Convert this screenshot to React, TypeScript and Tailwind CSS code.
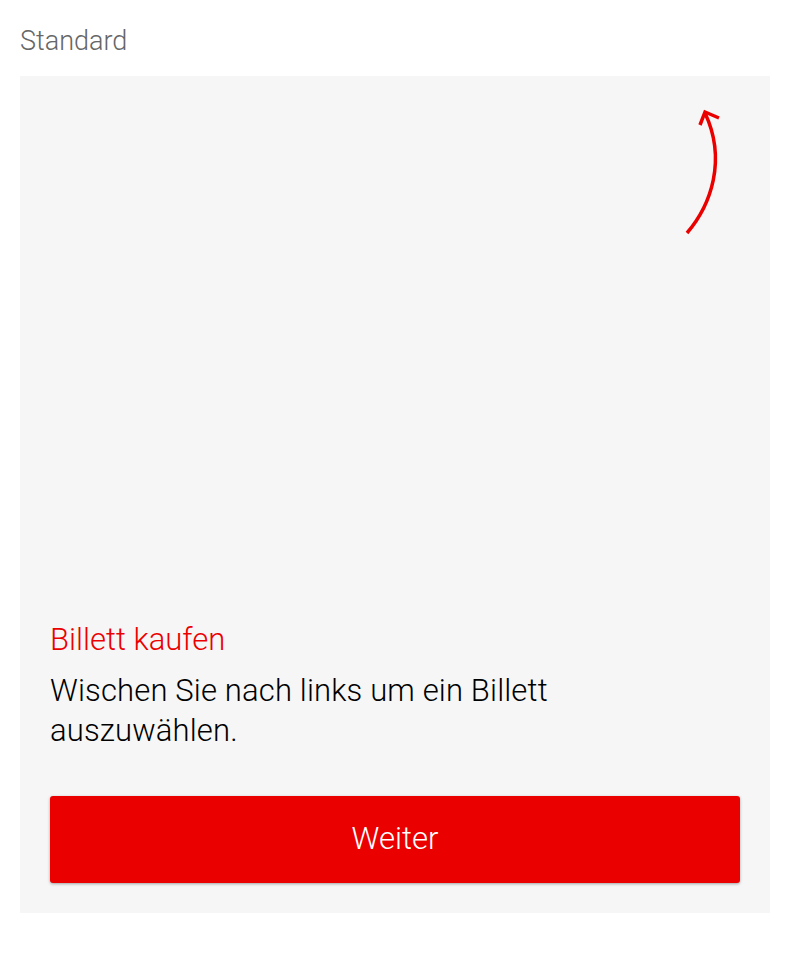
export default function App() {
	return (
		<div className="w-[790px] h-[954px] bg-white px-[20px] pt-[27px] font-['Roboto',Arial,sans-serif]">
			<h2 className="text-[27px] leading-[28px] text-[#666666] font-light mb-[21px]">Standard</h2>
			<div className="h-[837px] bg-[#f6f6f6] flex flex-col px-[30px] pt-[29px] pb-[30px]">
				{/* swipe hint arrow */}
				<svg className="self-end mr-[15px] shrink-0" width="45" height="135" viewBox="0 0 45 135" fill="none">
					<path d="M7 128 C31 100 47 55 25 8" stroke="#eb0000" strokeWidth="3.5" strokeLinecap="butt" />
					<path d="M20 20 L25 7 L39 13" stroke="#eb0000" strokeWidth="3.5" strokeLinecap="butt" strokeLinejoin="miter" />
				</svg>
				<div className="flex-1"></div>
				<h1 className="text-[31px] leading-[36px] text-[#eb0000] font-light">Billett kaufen</h1>
				<p className="mt-[13px] text-[31px] leading-[40px] tracking-[0.15px] text-black font-light pr-[150px]">
					Wischen Sie nach links um ein Billett auszuwählen.
				</p>
				<button className="mt-[45px] h-[87px] w-full rounded-[3px] bg-[#eb0000] text-white text-[31px] font-light shadow-[0_1px_3px_rgba(0,0,0,0.35)]">
					Weiter
				</button>
			</div>
		</div>
	);
}
